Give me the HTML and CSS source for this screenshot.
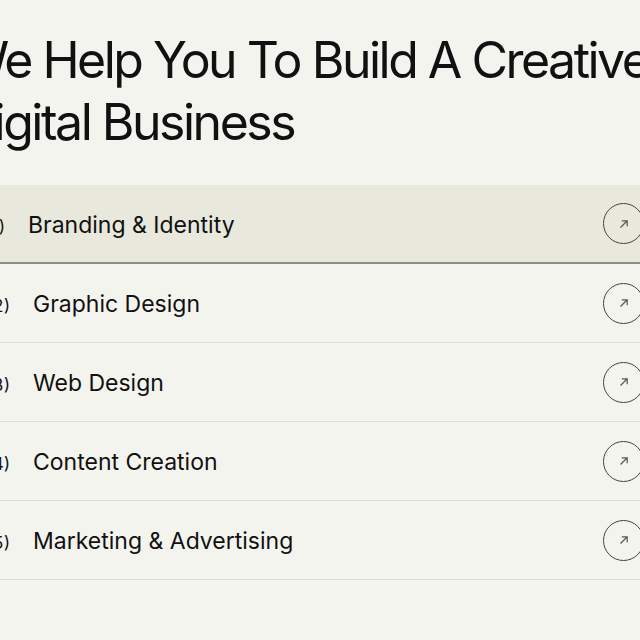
FILE: index.html
```html
<!DOCTYPE html>
<html lang="en">
<head>
	<meta charset="UTF-8">
	<meta name="viewport" content="width=device-width, initial-scale=1.0">
	<title>Services</title>
	<link rel="stylesheet" href="styles.css">
</head>
<body>
	<section class="services">
		<h1 class="services-title">
			<span class="title-line">We Help You To Build A Creative</span>
			<span class="title-line">Digital Business</span>
		</h1>
		<ul class="service-list">
			<li class="service active">
				<span class="service-label"><span class="service-num">(01)</span>Branding &amp; Identity</span>
				<span class="service-arrow">
					<svg viewBox="0 0 12 12" width="12" height="12"><path d="M2.5 9.5 L9 3 M3.8 2.8 H9.2 V8.2" fill="none" stroke="currentColor" stroke-width="1.2"/></svg>
				</span>
			</li>
			<li class="service">
				<span class="service-label"><span class="service-num">(02)</span>Graphic Design</span>
				<span class="service-arrow">
					<svg viewBox="0 0 12 12" width="12" height="12"><path d="M2.5 9.5 L9 3 M3.8 2.8 H9.2 V8.2" fill="none" stroke="currentColor" stroke-width="1.2"/></svg>
				</span>
			</li>
			<li class="service">
				<span class="service-label"><span class="service-num">(03)</span>Web Design</span>
				<span class="service-arrow">
					<svg viewBox="0 0 12 12" width="12" height="12"><path d="M2.5 9.5 L9 3 M3.8 2.8 H9.2 V8.2" fill="none" stroke="currentColor" stroke-width="1.2"/></svg>
				</span>
			</li>
			<li class="service">
				<span class="service-label"><span class="service-num">(04)</span>Content Creation</span>
				<span class="service-arrow">
					<svg viewBox="0 0 12 12" width="12" height="12"><path d="M2.5 9.5 L9 3 M3.8 2.8 H9.2 V8.2" fill="none" stroke="currentColor" stroke-width="1.2"/></svg>
				</span>
			</li>
			<li class="service">
				<span class="service-label"><span class="service-num">(05)</span>Marketing &amp; Advertising</span>
				<span class="service-arrow">
					<svg viewBox="0 0 12 12" width="12" height="12"><path d="M2.5 9.5 L9 3 M3.8 2.8 H9.2 V8.2" fill="none" stroke="currentColor" stroke-width="1.2"/></svg>
				</span>
			</li>
		</ul>
	</section>
</body>
</html>
```

FILE: styles.css
```css
html, body {
	margin          : 0;
	overflow        : hidden;
	background-color: #f4f4ee;
}

body {
	font-family: Inter, 'Noto Sans', sans-serif;
	color      : #111;
}

.services {
	width      : 702px;
	margin-left: -58px;
}

.services-title {
	margin        : 0;
	padding       : 29px 0 0 18px;
	font-size     : 50px;
	font-weight   : 400;
	line-height   : 62px;
	letter-spacing: -2.5px;
}

.title-line {
	display    : block;
	white-space: nowrap;
}

.service-list {
	list-style: none;
	margin    : 32px 0 0;
	padding   : 0;
}

.service {
	display        : flex;
	align-items    : center;
	justify-content: space-between;
	height         : 78px;
	padding        : 0 0 0 33px;
	border-bottom  : 1px solid #dfdfd8;
}

.service.active {
	height          : 77px;
	background-color: #e8e9dc;
	border-bottom   : 2px solid #8d8d86;
}

.service-label {
	display    : flex;
	align-items: baseline;
	font-size  : 23px;
	transform  : translateY(1px);
}

.service.active .service-label { transform: translate(-5px, 1px); }

.service-num {
	width               : 35px;
	margin-right        : 23px;
	font-size           : 17px;
	font-variant-numeric: tabular-nums;
}

.service-arrow {
	display        : flex;
	align-items    : center;
	justify-content: center;
	width          : 39px;
	height         : 39px;
	border         : 1.4px solid #444;
	border-radius  : 50%;
	color          : #555;
}
```
